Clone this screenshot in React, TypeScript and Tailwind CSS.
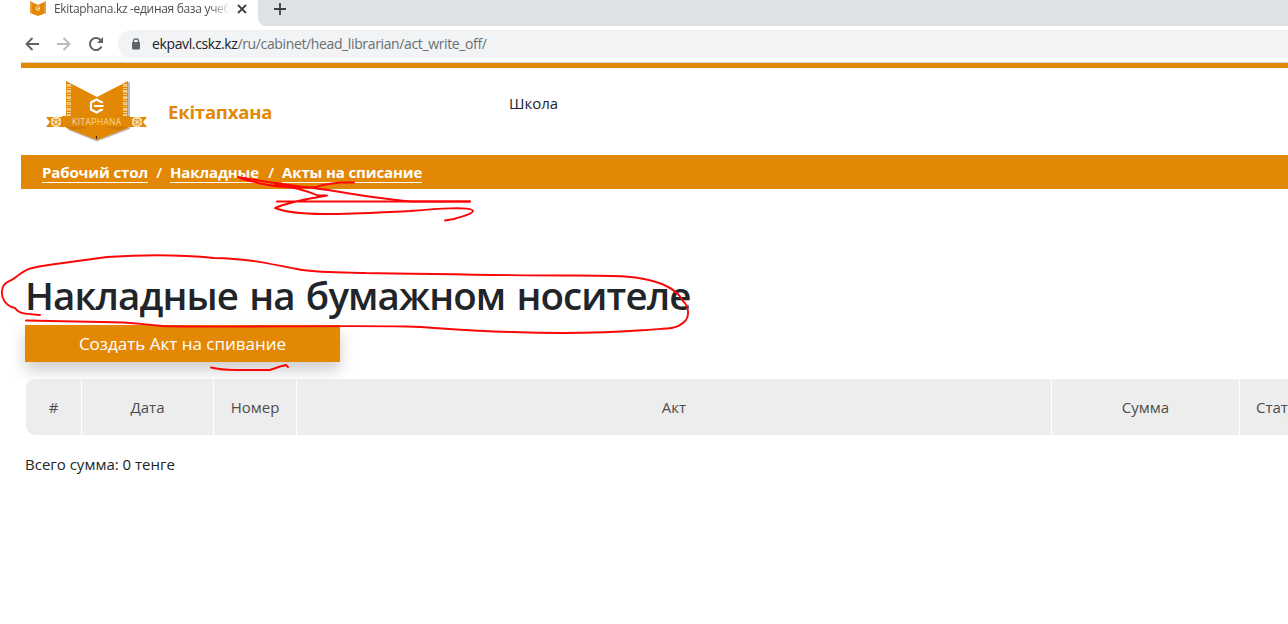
import React from "react";

const columns = [
  { label: "#", width: "w-[55px]" },
  { label: "Дата", width: "w-[131px]" },
  { label: "Номер", width: "w-[82px]" },
  { label: "Акт", width: "w-[754px]" },
  { label: "Сумма", width: "w-[187px]" },
];

function Logo() {
  return (
    <svg className="h-[62px] w-[102px] shrink-0" viewBox="0 0 102 62">
      <path d="M79 2 84 1V48L51 60.500 22 49Z" fill="#777" opacity=".5" />
      <path d="M20 0 51 16 82 0V47L51 59 20 47Z" fill="#e38804" />
      <path d="M22.800 3V36M79.200 3V36" stroke="#f6d5a6" strokeWidth="4" strokeDasharray="3 1 1 1" />
      <path d="M22.800 4V36M79.200 4V36" stroke="#e38804" strokeWidth="1" strokeDasharray="1.500 2" />
      <path d="M0 36H101L97 41 101 46H80V42H21V46H0L4 41Z" fill="#e38804" />
      <path d="M16 35H84V46H16Z" fill="#e38804" />
      <path d="M20 46H43L28 49ZM82 46H58L73 49Z" fill="#b86b00" opacity=".5" />
      <g fill="none" stroke="#fae8cd" strokeWidth="1.500">
        <path d="m10 36 4 2.300v5L10 46l-4-2.700v-5ZM91 36l4 2.300v5L91 46l-4-2.700v-5Z" />
        <path d="M7 39l6 4M7 43l6-4M10 37v8M88 39l6 4M88 43l6-4M91 37v8" strokeWidth="1" />
      </g>
      <path d="M56 22V21.500L50.500 18.500 45 21.500V28.500L50.500 31.500 56 28.500V28M48 25H57.500" fill="none" stroke="white" strokeWidth="2.200" />
      <path d="M50.500 55v3" stroke="#432900" />
      <text x="26" y="44" fill="#ffe9cc" fontFamily="Roboto" fontWeight="300" fontSize="8.500" textLength="49">KITAPHANA</text>
    </svg>
  );
}

function Annotations() {
  return (
    <svg className="pointer-events-none absolute left-0 top-0 h-[624px] w-[1288px]" viewBox="0 0 1288 624" fill="none" stroke="#fb0707" strokeWidth="1.900" strokeLinecap="round" strokeLinejoin="round">
      <path d="M354 182.500H340C331 184 323 184 317 187C296 189 267 186 255 182C249 181 241 179 238 177C270 183 303 187 328 190C358 195 384 199 411 201.500H470" />
      <path d="M277 201.500H470M275 184C292 187 308 191 318 195.500H327C313 198 301 200 294 202C286 204 279 206 275 208C299 218 363 213 410 211C434 209 473 206 473 211C472 215 462 216 454 219L445 220.500" />
      <path d="M40 315C26 314 19 314 15 308C5 306 1 297 2 291C3 281 9 283 16 277C29 267 31 268 52 264.500L107 257C152 254 185 255 214 258C254 259 269 264 297 269C315 273 341 272 365 273C440 274 500 275.500 565 275.500C612 275.500 639 275 662 284C674 289 680 295 683 301C689 306 690 317 684 322C675 331 660 328 646 330C605 333 562 334 512 332C459 331 434 327 407 326.500C323 325 226 328 162 326C137 324 135 322 101 322L26 320.500" />
      <path d="M211 367.500Q221 370 235 370H270L280 366.500L286 365L288 367" />
    </svg>
  );
}

function BrowserChrome() {
  return (
    <header>
      <div className="flex h-[26px] bg-white">
        <div className="flex w-[258px] shrink-0 items-start pl-[30px]">
          <svg className="h-[17px] w-[16px] shrink-0" viewBox="0 0 16 17">
            <path d="M0 1 8 5 16 1V13L8 16 0 13Z" fill="#e38804" />
            <path d="M1 1.500V13M15 1.500V13" stroke="#efb564" />
            <path d="M10 7.500 8 6.500 6 7.500V9.500L8 10.500 10 9.500M7 8.500H10" fill="none" stroke="#fbe3c0" strokeWidth=".9" />
          </svg>
          <div className="ml-2 mt-[-1px] h-5 w-[176px] overflow-hidden whitespace-nowrap bg-linear-to-r from-[#45484c] from-88% to-transparent bg-clip-text text-[12px] leading-5 tracking-[-0.32px] text-transparent">Ekitaphana.kz -единая база учеб</div>
          <svg className="ml-[7px] mt-1 h-[10px] w-[10px]" viewBox="0 0 10 10"><path d="m1 1 8 8M9 1 1 9" stroke="#3c4043" strokeWidth="1.800" /></svg>
        </div>
        <div className="h-[26px] flex-1 rounded-bl-[8px] bg-[#dee1e6]">
          <svg className="ml-4 mt-[3px] h-3 w-3" viewBox="0 0 12 12"><path d="M6 0V12M0 6H12" stroke="#3c4043" strokeWidth="1.800" /></svg>
        </div>
      </div>
      <div className="flex h-[36px] items-center bg-white pl-[25px]">
        <svg className="h-[14px] w-[14px]" viewBox="0 0 14 14" fill="none" stroke="#5f6368" strokeWidth="1.900"><path d="M14 7H1.500M7.500 1 1.500 7 7.500 13" /></svg>
        <svg className="ml-[18px] h-[14px] w-[14px]" viewBox="0 0 14 14" fill="none" stroke="#babcbe" strokeWidth="1.900"><path d="M0 7H12.500M6.500 1 12.500 7 6.500 13" /></svg>
        <svg className="ml-[18px] h-[14px] w-[14px]" viewBox="0 0 14 14"><path d="M12.500 9.500A6 6 0 1 1 11.200 2.800L12 3.600" fill="none" stroke="#5f6368" strokeWidth="2" /><path d="M14 0V6H8Z" fill="#5f6368" /></svg>
        <div className="ml-[15px] flex h-[28px] flex-1 items-center rounded-l-full bg-[#f1f3f4] pl-[14px]">
          <svg className="h-3 w-2" viewBox="0 0 8 12"><path d="M1.500 5V3Q1.500 1 4 1T6.500 3V5" fill="none" stroke="#5f6368" strokeWidth="1.300" /><rect y="4" width="8" height="7.500" rx="1" fill="#5f6368" /></svg>
          <div className="ml-[12px] whitespace-nowrap text-[14px] leading-5 tracking-[-0.37px] text-[#6b6f73]"><span className="text-[#202124]">ekpavl.cskz.kz</span>/ru/cabinet/head_librarian/act_write_off/</div>
        </div>
      </div>
    </header>
  );
}

export default function App() {
  return (
    <div className="relative h-[624px] w-[1288px] overflow-hidden bg-white font-['Open_Sans',sans-serif] text-[#212529]">
      <BrowserChrome />
      <div className="ml-[21px] h-[6px] border-t border-[#d2d5d9] bg-[#e38804]" />
      <div className="flex h-[87px] items-start pl-[46px]">
        <div className="mt-[13px]"><Logo /></div>
        <div className="ml-[20px] mt-[30px] w-[341px] whitespace-nowrap text-[18.5px] leading-7 tracking-[-0.2px] font-bold text-[#e38804]">Екітапхана</div>
        <div className="mt-[23px] text-[15px] leading-6">Школа</div>
      </div>
      <nav className="ml-[21px] flex h-[34px] items-start bg-[#e38804] pl-[21px] pt-[8px] text-[15px] leading-[18px] tracking-[-0.12px] font-bold text-white">
        <span className="h-5 w-[106px] whitespace-nowrap border-b border-white">Рабочий стол</span>
        <span className="w-[22px] text-center font-semibold">/</span>
        <span className="h-5 w-[90px] whitespace-nowrap border-b border-white">Накладные</span>
        <span className="w-[22px] text-center font-semibold">/</span>
        <span className="h-5 w-[140px] whitespace-nowrap border-b border-white">Акты на списание</span>
      </nav>
      <main className="pl-[25px] pt-[82px]">
        <h1 className="h-[54px] whitespace-nowrap text-[38.5px] leading-[48px] tracking-[-0.88px] [word-spacing:2px] font-semibold">Накладные на бумажном носителе</h1>
        <button className="block h-[37px] w-[315px] whitespace-nowrap bg-[#e38804] text-[17px] leading-[37px] text-white shadow-[0_8px_16px_rgba(0,0,0,0.2)]">Создать Акт на спивание</button>
        <div className="ml-px mt-[17px] flex h-[56px] gap-px overflow-hidden rounded-l-[9px] text-[15px] text-[#4c4c4c]">
          {columns.map(({ label, width }) => (
            <div key={label} className={`${width} flex shrink-0 items-center justify-center bg-[#ededed]`}>{label}</div>
          ))}
          <div className="flex w-[90px] shrink-0 items-center bg-[#ededed] pl-4">Статус</div>
        </div>
        <p className="mt-[17px] whitespace-nowrap text-[15px] leading-6">Всего сумма: 0 тенге</p>
      </main>
      <Annotations />
    </div>
  );
}
